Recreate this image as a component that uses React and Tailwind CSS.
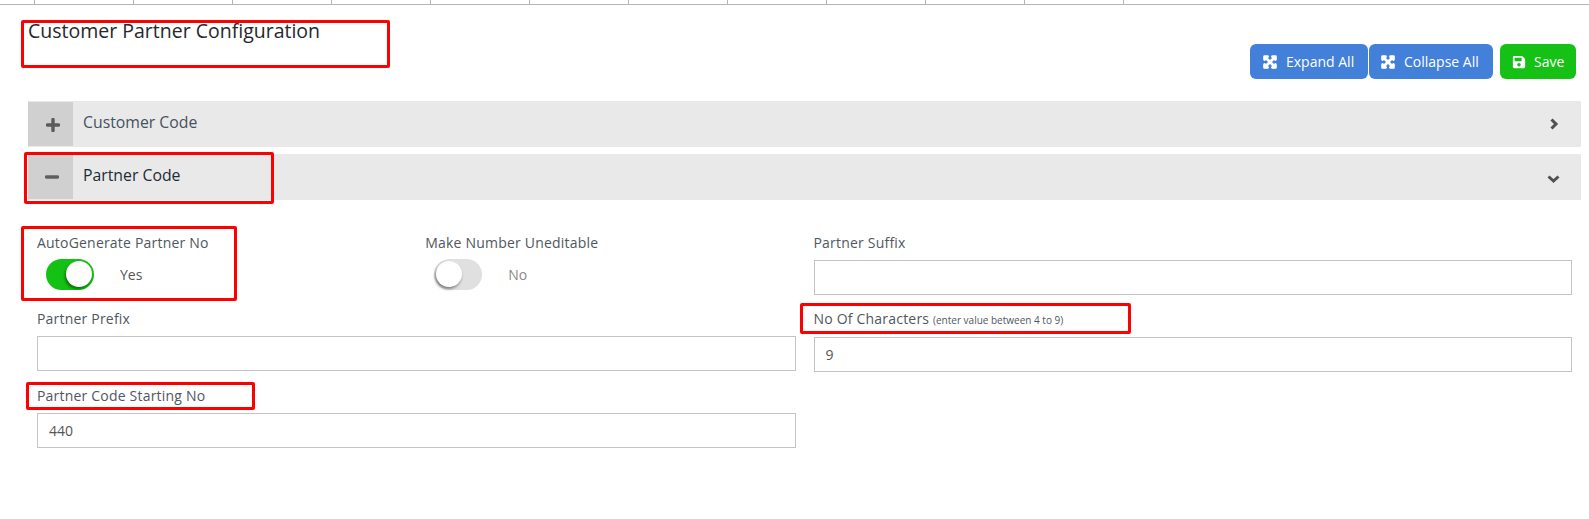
import React from "react";
import { FaExpandArrowsAlt, FaSave } from "react-icons/fa";

const Ticks = () => (
  <div className="flex h-[5px] border-b border-[#b5b5b5] pl-[34px]">
    {Array.from({ length: 12 }).map((_, i) => (
      <div key={i} className="w-[99px] shrink-0 border-l border-[#b5b5b5]" />
    ))}
  </div>
);

const Mark = ({ className }) => (
  <div className={"pointer-events-none absolute rounded-[2px] border-[3px] border-[#ff0000] " + className} />
);

const Plus = () => (
  <svg width="14" height="14" viewBox="0 0 14 14" className="mt-[2px] ml-[4px]"><path d="M7 1.5v11M1.5 7h11" stroke="#5a5a5a" strokeWidth="3.4" strokeLinecap="round" /></svg>
);
const Minus = () => (
  <svg width="14" height="14" viewBox="0 0 14 14" className="ml-[3px]"><path d="M1.5 7h11" stroke="#5f5f5f" strokeWidth="3.4" strokeLinecap="round" /></svg>
);
const ChevR = () => (
  <svg width="10" height="12" viewBox="0 0 10 12" className="ml-[2px]"><path d="M2.5 1.5 7 6l-4.5 4.5" fill="none" stroke="#505050" strokeWidth="3" /></svg>
);
const ChevD = () => (
  <svg width="13" height="10" viewBox="0 0 13 10" className="mt-[3px]"><path d="M1.5 2.5 6.5 7l5-4.5" fill="none" stroke="#505050" strokeWidth="3" /></svg>
);

const Bar = ({ icon, text, chevron, dark }) => (
  <div className="flex h-[46px] items-stretch bg-[#e9e9e9]">
    <div className="my-[1px] flex w-[45px] items-center justify-center bg-[#d0d0d0]">{icon}</div>
    <div className={"flex flex-1 items-center pb-[3px] pl-[10px] text-[15.8px] " + (dark ? "text-[#212b36]" : "text-[#45525f]")}>{text}</div>
    <div className="flex w-[56px] items-center justify-center">{chevron}</div>
  </div>
);

const Label = ({ children }) => (
  <div className="text-[14px] font-medium leading-[20px] tracking-[0.2px] text-[#4f5760]">{children}</div>
);

const Input = ({ value }) => (
  <div className="mt-[7px] flex h-[35px] items-center border border-[#c4c4c4] bg-white px-[11px] text-[14px] text-[#555]">{value}</div>
);

const Toggle = ({ on, label }) => (
  <div className="mt-[6px] flex h-[31px] items-center">
    <div className={"relative ml-[9px] h-[31px] w-[48px] rounded-full " + (on ? "bg-[#14c114]" : "bg-[#e0e0e0]")}>
      <div className={"absolute top-[2px] h-[26px] w-[26px] rounded-full bg-white shadow-[-1px_2px_3px_rgba(0,0,0,0.45)] " + (on ? "right-[2px]" : "left-[2px]")} />
    </div>
    <span className={"ml-[26px] text-[14px] " + (on ? "text-[#555]" : "text-[#8a8a8a]")}>{label}</span>
  </div>
);

const Btn = ({ icon, text, className }) => (
  <button className={"flex h-[35px] items-center rounded-[6px] text-[14px] text-white " + className}>
    {icon}
    <span>{text}</span>
  </button>
);

const Arrows = () => (
  <FaExpandArrowsAlt className="mr-[9px] h-[14px] w-[14px]" stroke="currentColor" strokeWidth={50} />
);

export default function App() {
  return (
    <div className="relative h-[519px] w-[1589px] overflow-hidden bg-white" style={{ fontFamily: '"Open Sans", sans-serif' }}>
      <Ticks />
      <div className="pl-[28px] pr-[8px]">
        <div className="flex h-[96px] items-start justify-between">
          <h1 className="mt-[13px] text-[19.5px] font-normal leading-[26px] text-[#25282c]">Customer Partner Configuration</h1>
          <div className="mt-[39px] mr-[5px] flex">
            <Btn className="w-[118px] bg-[#4380da] pl-[13px]" icon={<Arrows />} text="Expand All" />
            <Btn className="ml-[1px] w-[124px] bg-[#4380da] pl-[12px]" icon={<Arrows />} text="Collapse All" />
            <Btn className="ml-[7px] w-[76px] bg-[#14c114] pl-[12px]" icon={<FaSave className="mr-[8px] h-[14px] w-[14px]" />} text="Save" />
          </div>
        </div>
        <div className="flex flex-col gap-[7px]">
          <Bar icon={<Plus />} text="Customer Code" chevron={<ChevR />} />
          <Bar dark icon={<Minus />} text="Partner Code" chevron={<ChevD />} />
        </div>
        <div className="mt-[33px] grid grid-cols-12 gap-y-[14px]">
          <div className="col-span-3 px-[9px]">
            <Label>AutoGenerate Partner No</Label>
            <Toggle on label="Yes" />
          </div>
          <div className="col-span-3 px-[9px]">
            <Label>Make Number Uneditable</Label>
            <Toggle label="No" />
          </div>
          <div className="col-span-6 px-[9px]">
            <Label>Partner Suffix</Label>
            <Input />
          </div>
          <div className="col-span-6 px-[9px]">
            <Label>Partner Prefix</Label>
            <Input />
          </div>
          <div className="col-span-6 px-[9px]">
            <Label>
              No Of Characters <span className="text-[10px] font-normal tracking-normal">(enter value between 4 to 9)</span>
            </Label>
            <Input value="9" />
          </div>
          <div className="col-span-6 px-[9px]">
            <Label>Partner Code Starting No</Label>
            <Input value="440" />
          </div>
        </div>
      </div>
      <Mark className="left-[21px] top-[20px] h-[48px] w-[369px]" />
      <Mark className="left-[24px] top-[152px] h-[52px] w-[250px]" />
      <Mark className="left-[21px] top-[226px] h-[75px] w-[216px]" />
      <Mark className="left-[26px] top-[382px] h-[28px] w-[229px]" />
      <Mark className="left-[800px] top-[303px] h-[31px] w-[331px]" />
    </div>
  );
}
